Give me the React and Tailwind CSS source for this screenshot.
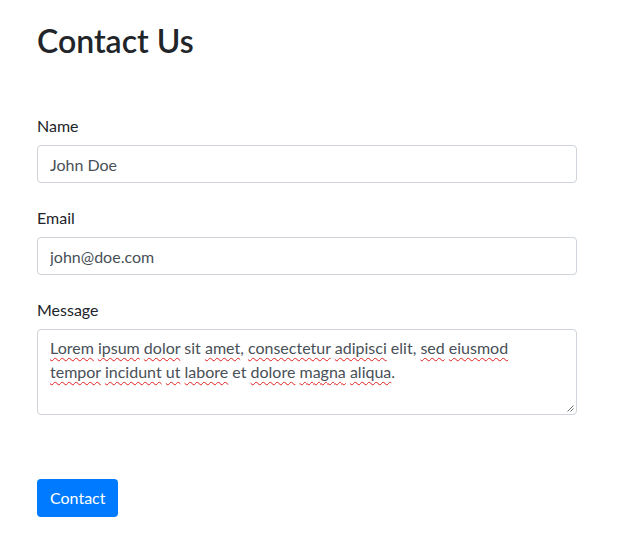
import React from 'react';

const typo = (w) => (
    <span className="underline decoration-wavy decoration-[#e0201f] decoration-1 underline-offset-[3px]">{w}</span>
);

export default function App() {
    return (
        <div className="min-h-screen bg-white px-[37px] pt-[22px] font-['Lato',sans-serif] text-[#212529]">
            {/* Header */}
            <h2 className="text-[32px] font-semibold leading-[1.2]">Contact Us</h2>

            <form className="mt-[53px] w-[540px]" onSubmit={(e) => e.preventDefault()}>
                <div className="mb-[22px]">
                    <label className="mb-[7px] block pt-px text-base leading-6">Name</label>
                    <input
                        defaultValue="John Doe"
                        className="block h-[38px] w-full rounded border border-[#ced4da] px-3 py-1.5 text-base leading-6 text-[#495057] outline-none"
                    />
                </div>

                <div className="mb-[22px]">
                    <label className="mb-[7px] block pt-px text-base leading-6">Email</label>
                    <input
                        defaultValue="john@doe.com"
                        className="block h-[38px] w-full rounded border border-[#ced4da] px-3 py-1.5 text-base leading-6 text-[#495057] outline-none"
                    />
                </div>

                <div>
                    <label className="mb-[7px] block pt-px text-base leading-6">Message</label>
                    <div
                        role="textbox"
                        className="relative h-[86px] w-full rounded border border-[#ced4da] px-3 py-1.5 text-base leading-6 text-[#495057]"
                    >
                        <div>
                            {typo('Lorem')} {typo('ipsum')} {typo('dolor')} sit {typo('amet')}, {typo('consectetur')} {typo('adipisci')} elit, {typo('sed')} {typo('eiusmod')}
                        </div>
                        <div>
                            {typo('tempor')} {typo('incidunt')} {typo('ut')} {typo('labore')} et {typo('dolore')} {typo('magna')} {typo('aliqua')}.
                        </div>
                        {/* resize grip */}
                        <svg className="absolute bottom-[2px] right-[2px]" width="8" height="8" viewBox="0 0 8 8">
                            <path d="M7.5 1.5 L1.5 7.5 M7.5 4.5 L4.5 7.5" stroke="#6b6b6b" strokeWidth="1" />
                        </svg>
                    </div>
                </div>

                <button
                    type="submit"
                    className="mt-16 h-[38px] rounded bg-[#007bff] px-[13px] text-base leading-6 text-white"
                >
                    Contact
                </button>
            </form>
        </div>
    );
}
